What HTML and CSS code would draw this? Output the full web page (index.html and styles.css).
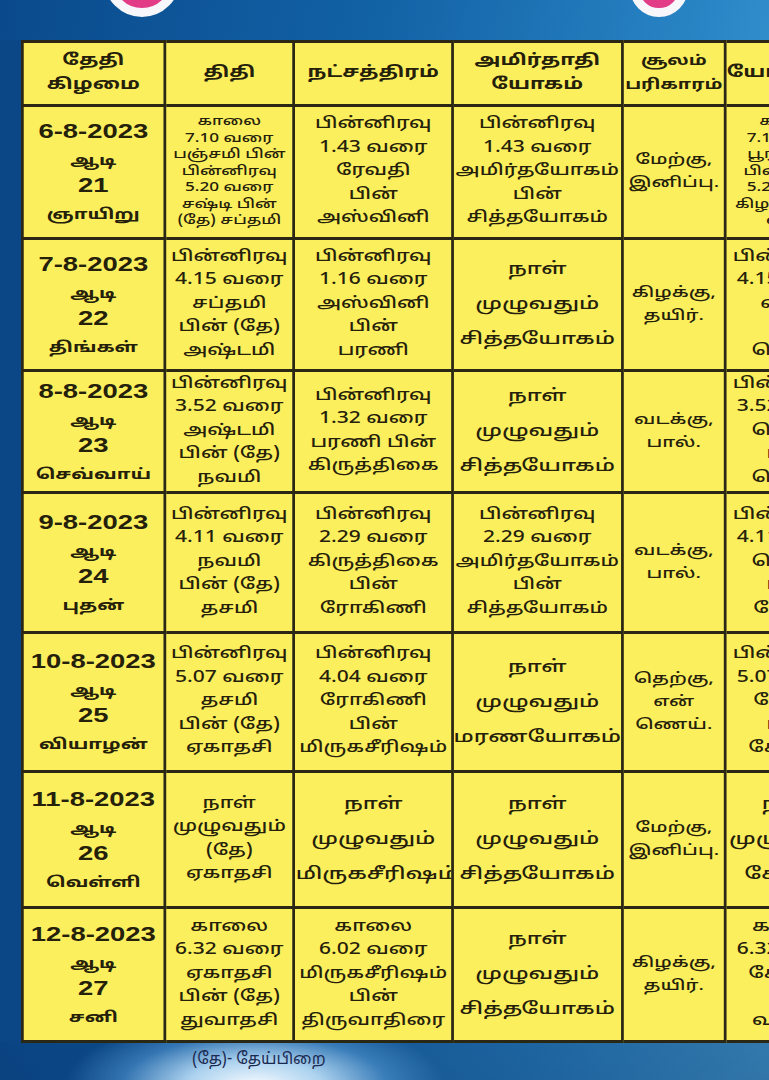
FILE: index.html
```html
<!DOCTYPE html>
<html lang="ta">
<head>
<meta charset="utf-8">
<title>ஆடி பஞ்சாங்கம்</title>
<link rel="stylesheet" href="styles.css">
</head>
<body>
<div class="page">
  <div class="top">
    <span class="orb orb-left"></span>
    <span class="orb orb-right"></span>
  </div>
  <div class="frame">
    <div class="sheet">
      <table class="cal">
        <colgroup>
          <col class="c1"><col class="c2"><col class="c3"><col class="c4"><col class="c5"><col class="c6">
        </colgroup>
        <thead>
          <tr class="hr">
            <th>தேதி<br>கிழமை</th>
            <th>திதி</th>
            <th>நட்சத்திரம்</th>
            <th>அமிர்தாதி<br>யோகம்</th>
            <th class="hsm">சூலம்<br>பரிகாரம்</th>
            <th>யோகம் முடிவு</th>
          </tr>
        </thead>
        <tbody>
          <tr class="r1">
            <td class="d">6-8-2023<br><span class="tw">ஆடி</span><br>21<br><span class="tw">ஞாயிறு</span></td>
            <td class="sm">காலை<br>7.10 வரை<br>பஞ்சமி பின்<br>பின்னிரவு<br>5.20 வரை<br>சஷ்டி பின்<br>(தே) சப்தமி</td>
            <td class="t">பின்னிரவு<br>1.43 வரை<br>ரேவதி<br>பின்<br>அஸ்வினி</td>
            <td class="t">பின்னிரவு<br>1.43 வரை<br>அமிர்தயோகம்<br>பின்<br>சித்தயோகம்</td>
            <td class="dir">மேற்கு,<br>இனிப்பு.</td>
            <td class="sm">காலை<br>7.10 வரை<br>பூரம் பின்<br>பின்னிரவு<br>5.20 வரை<br>கிழக்கு பின்<br>வரை</td>
          </tr>
          <tr class="r2">
            <td class="d">7-8-2023<br><span class="tw">ஆடி</span><br>22<br><span class="tw">திங்கள்</span></td>
            <td class="t">பின்னிரவு<br>4.15 வரை<br>சப்தமி<br>பின் (தே)<br>அஷ்டமி</td>
            <td class="t">பின்னிரவு<br>1.16 வரை<br>அஸ்வினி<br>பின்<br>பரணி</td>
            <td class="big">நாள்<br>முழுவதும்<br>சித்தயோகம்</td>
            <td class="dir">கிழக்கு,<br>தயிர்.</td>
            <td class="t">பின்னிரவு<br>4.15 வரை<br>வரை<br>&nbsp;<br>தெற்கு</td>
          </tr>
          <tr class="r3">
            <td class="d">8-8-2023<br><span class="tw">ஆடி</span><br>23<br><span class="tw">செவ்வாய்</span></td>
            <td class="t">பின்னிரவு<br>3.52 வரை<br>அஷ்டமி<br>பின் (தே)<br>நவமி</td>
            <td class="t">பின்னிரவு<br>1.32 வரை<br>பரணி பின்<br>கிருத்திகை</td>
            <td class="big">நாள்<br>முழுவதும்<br>சித்தயோகம்</td>
            <td class="dir">வடக்கு,<br>பால்.</td>
            <td class="t">பின்னிரவு<br>3.52 வரை<br>தெற்கு<br>பின்<br>தெற்கு</td>
          </tr>
          <tr class="r4">
            <td class="d">9-8-2023<br><span class="tw">ஆடி</span><br>24<br><span class="tw">புதன்</span></td>
            <td class="t">பின்னிரவு<br>4.11 வரை<br>நவமி<br>பின் (தே)<br>தசமி</td>
            <td class="t">பின்னிரவு<br>2.29 வரை<br>கிருத்திகை<br>பின்<br>ரோகிணி</td>
            <td class="t">பின்னிரவு<br>2.29 வரை<br>அமிர்தயோகம்<br>பின்<br>சித்தயோகம்</td>
            <td class="dir">வடக்கு,<br>பால்.</td>
            <td class="t">பின்னிரவு<br>4.11 வரை<br>தெற்கு<br>பின்<br>மேற்கு</td>
          </tr>
          <tr class="r5">
            <td class="d">10-8-2023<br><span class="tw">ஆடி</span><br>25<br><span class="tw">வியாழன்</span></td>
            <td class="t">பின்னிரவு<br>5.07 வரை<br>தசமி<br>பின் (தே)<br>ஏகாதசி</td>
            <td class="t">பின்னிரவு<br>4.04 வரை<br>ரோகிணி<br>பின்<br>மிருகசீரிஷம்</td>
            <td class="big">நாள்<br>முழுவதும்<br>மரணயோகம்</td>
            <td class="dir">தெற்கு,<br>என்<br>ணெய்.</td>
            <td class="t">பின்னிரவு<br>5.07 வரை<br>மேற்கு<br>பின்<br>சேர்த்து</td>
          </tr>
          <tr class="r6">
            <td class="d">11-8-2023<br><span class="tw">ஆடி</span><br>26<br><span class="tw">வெள்ளி</span></td>
            <td class="t">நாள்<br>முழுவதும்<br>(தே)<br>ஏகாதசி</td>
            <td class="big">நாள்<br>முழுவதும்<br>மிருகசீரிஷம்</td>
            <td class="big">நாள்<br>முழுவதும்<br>சித்தயோகம்</td>
            <td class="dir">மேற்கு,<br>இனிப்பு.</td>
            <td class="big">நாள்<br>முழுவதும்<br>சேர்த்து</td>
          </tr>
          <tr class="r7">
            <td class="d">12-8-2023<br><span class="tw">ஆடி</span><br>27<br><span class="tw">சனி</span></td>
            <td class="t">காலை<br>6.32 வரை<br>ஏகாதசி<br>பின் (தே)<br>துவாதசி</td>
            <td class="t">காலை<br>6.02 வரை<br>மிருகசீரிஷம்<br>பின்<br>திருவாதிரை</td>
            <td class="big">நாள்<br>முழுவதும்<br>சித்தயோகம்</td>
            <td class="dir">கிழக்கு,<br>தயிர்.</td>
            <td class="t">காலை<br>6.32 வரை<br>சேர்த்து<br>&nbsp;<br>வடக்கு</td>
          </tr>
        </tbody>
      </table>
    </div>
  </div>
  <div class="foot">
    <p class="note">(தே)- தேய்பிறை</p>
  </div>
</div>
</body>
</html>
```

FILE: styles.css
```css
html, body {
  margin: 0;
  padding: 0;
}

body {
  width: 769px;
  height: 1080px;
  overflow: hidden;
  background:
    radial-gradient(ellipse 190px 70px at 255px 1085px, rgba(245, 250, 255, 1) 0%, rgba(190, 225, 250, 0.9) 35%, rgba(90, 160, 220, 0.5) 70%, rgba(20, 80, 150, 0) 100%),
    linear-gradient(180deg, rgba(0, 0, 0, 0) 0%, rgba(0, 0, 0, 0) 55%, rgba(4, 30, 80, 0.35) 100%),
    linear-gradient(100deg, #0a4a8c 0%, #1262a6 40%, #2a86c6 75%, #4aa5d8 100%);
  font-family: "Noto Sans Tamil", "Lohit Tamil", "Liberation Sans", "Noto Sans", sans-serif;
  color: #24200a;
}

.page {
  display: flex;
  flex-direction: column;
  height: 1080px;
}

.top {
  height: 40px;
  display: flex;
  align-items: flex-start;
}

.orb {
  display: block;
  border-radius: 50%;
  background: #e23c86;
  border: 9px solid #f6f6fb;
  box-sizing: border-box;
}

.orb-left {
  width: 76px;
  height: 76px;
  margin-top: -59px;
  margin-left: 104px;
}

.orb-right {
  width: 58px;
  height: 58px;
  margin-top: -41px;
  margin-left: 450px;
}

.frame {
  padding-left: 21px;
  height: 1001px;
  box-shadow: inset 22px 0 0 #0b4787;
}

.sheet {
  width: 720px;
  transform: scaleX(1.37);
  transform-origin: 0 0;
}

.cal {
  border-collapse: collapse;
  table-layout: fixed;
  width: 610px;
  background: #fcef5e;
}

.c1 { width: 103.6px; }
.c2 { width: 94.9px; }
.c3 { width: 115.3px; }
.c4 { width: 124.1px; }
.c5 { width: 75.2px; }
.c6 { width: 96px; }

.cal th,
.cal td {
  border-left: 2px solid #2a2714;
  border-right: 2px solid #2a2714;
  border-top: 3px solid #2a2714;
  border-bottom: 3px solid #2a2714;
  text-align: center;
  vertical-align: middle;
  padding: 0;
  white-space: nowrap;
  overflow: hidden;
}

.hr { height: 64px; }
.r1 { height: 133px; }
.r2 { height: 132px; }
.r3 { height: 122px; }
.r4 { height: 140px; }
.r5 { height: 139px; }
.r6 { height: 136px; }
.r7 { height: 134px; }

.cal th {
  font-size: 15.5px;
  line-height: 24px;
  font-weight: 700;
}

.cal th.hsm {
  font-size: 14px;
}

.d {
  font-family: "Liberation Sans", "Noto Sans Tamil", "Lohit Tamil", sans-serif;
  font-weight: 700;
  font-size: 20px;
  line-height: 27px;
}

.d .tw {
  font-family: "Noto Sans Tamil", "Lohit Tamil", sans-serif;
  font-size: 14.5px;
  line-height: 18px;
}

.t {
  font-size: 15.3px;
  line-height: 23.5px;
  font-weight: 500;
}

.cal td.sm {
  font-size: 12.5px;
  line-height: 16.5px;
  font-weight: 500;
}

.big {
  font-size: 16.8px;
  line-height: 35px;
  font-weight: 500;
}

.dir {
  font-size: 14.5px;
  line-height: 23px;
  font-weight: 500;
}

.foot {
  flex: 1;
  display: flex;
  align-items: flex-start;
}

.note {
  margin: 9px 0 0 192px;
  font-size: 16px;
  color: #1b2a52;
}
```
